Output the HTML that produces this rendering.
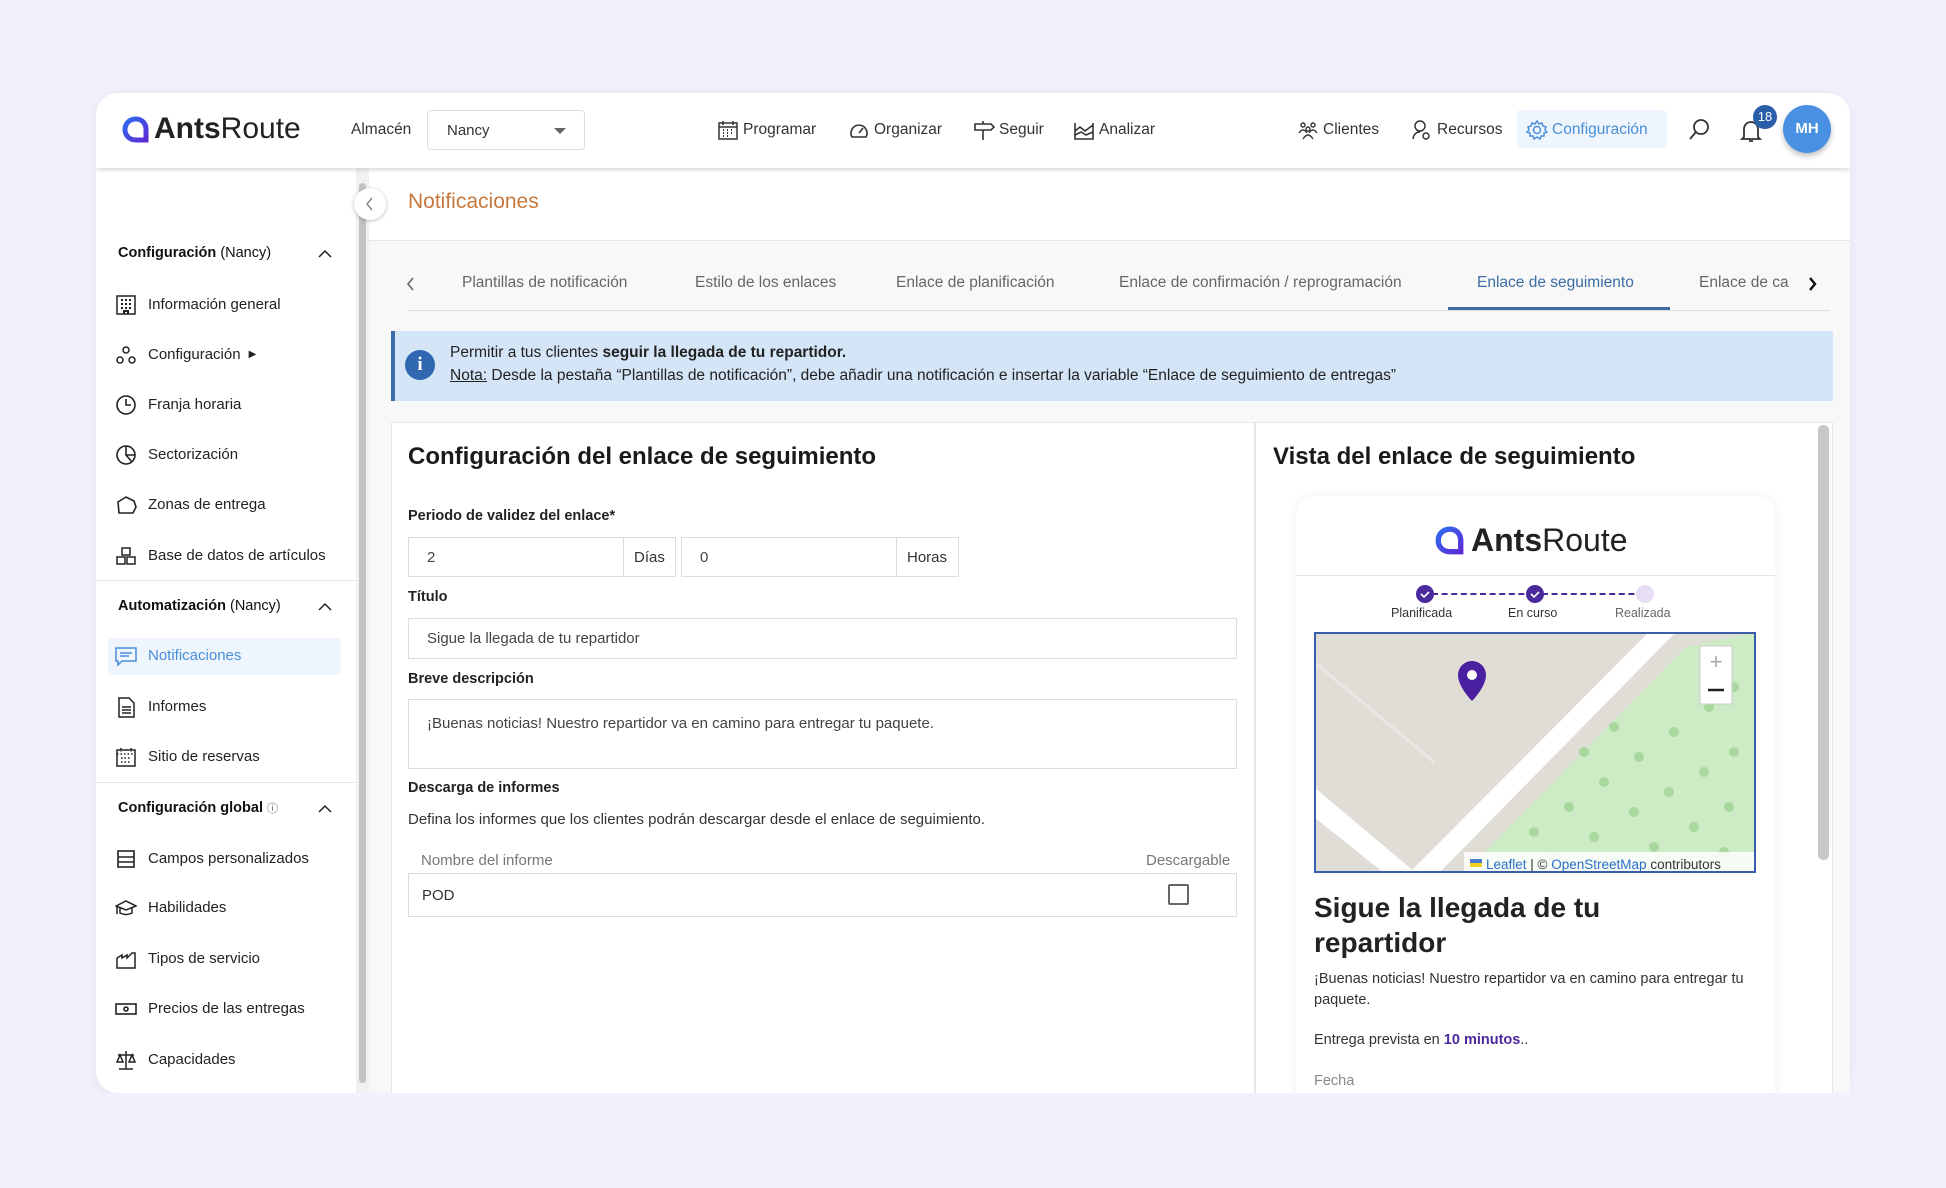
<!DOCTYPE html>
<html><head><meta charset="utf-8">
<style>
*{box-sizing:border-box;margin:0;padding:0}
body{width:1946px;height:1188px;background:#f2f0fa;font-family:"Liberation Sans",sans-serif;color:#222;position:relative;overflow:hidden}
.a{position:absolute;white-space:nowrap}
.card{position:absolute;left:96px;top:93px;width:1754px;height:1000px;background:#fff;border-radius:22px;overflow:hidden;box-shadow:0 2px 10px rgba(80,70,140,.08)}
.hdr{position:absolute;left:0;top:0;width:1754px;height:75px;background:#fff;box-shadow:0 2px 4px rgba(0,0,0,.15);z-index:3}
.nav{font-size:15.5px;color:#333;display:flex;align-items:center;gap:4px}
.nav svg{width:22px;height:22px}
.side .it{position:absolute;left:52px;font-size:15px;color:#222;display:flex;align-items:center}
.side .it svg{width:22px;height:22px;margin-right:11px;margin-left:-33px;position:absolute;left:0}
.sh{position:absolute;left:22px;font-size:14.5px;font-weight:bold;color:#111}
.sh i{font-style:normal;font-weight:normal}
.chev{position:absolute;left:222px;width:14px;height:14px}
.tab{position:absolute;top:274px;font-size:15.5px;color:#666}
.lbl{position:absolute;left:408px;font-size:14.5px;font-weight:bold;color:#222}
.inp{position:absolute;border:1px solid #ddd;background:#fff;font-size:15px;color:#444;display:flex;align-items:center;padding-left:18px}
</style></head><body>
<div class="card">
 <div class="hdr">
  <svg class="a" style="left:26px;top:23px" width="28" height="28" viewBox="0 0 28 28"><defs><linearGradient id="g" x1="0" y1="0" x2="1" y2="1"><stop offset="0" stop-color="#2f6df0"/><stop offset="1" stop-color="#5a2bd6"/></linearGradient></defs><path d="M14 3C7.5 3 3 7.5 3 13.5S7.5 24 14 24h10V13.5C24 7.5 20 3 14 3z" fill="none" stroke="url(#g)" stroke-width="5"/></svg>
  <div class="a" style="left:58px;top:19px;font-size:30px;color:#222"><b>Ants</b>Route</div>
  <div class="a" style="left:255px;top:28px;font-size:15.5px;color:#333">Almacén</div>
  <div class="a" style="left:331px;top:17px;width:158px;height:40px;border:1px solid #ddd;border-radius:4px;font-size:15px;color:#333;padding:11px 0 0 19px">Nancy<span style="position:absolute;right:18px;top:17px;border:6px solid transparent;border-top:6px solid #666;border-bottom:0"></span></div>
  <div class="a nav" style="left:621px;top:26px"><svg viewBox="0 0 22 22" fill="none" stroke="#333" stroke-width="1.5"><rect x="2" y="4" width="18" height="16"/><path d="M2 8h18M6 2v4M16 2v4"/><path d="M6 11h1M10 11h1M14 11h1M6 14h1M10 14h1M14 14h1M6 17h1M10 17h1" stroke-width="2"/></svg>Programar</div>
  <div class="a nav" style="left:752px;top:26px"><svg viewBox="0 0 22 22" fill="none" stroke="#333" stroke-width="1.6"><path d="M4 18a8 8 0 1 1 14 0z"/><path d="M11 14l4-5"/></svg>Organizar</div>
  <div class="a nav" style="left:877px;top:26px"><svg viewBox="0 0 22 22" fill="none" stroke="#333" stroke-width="1.6"><path d="M2 5h16l3 3-3 3H2zM10 2v3M10 11v10"/></svg>Seguir</div>
  <div class="a nav" style="left:977px;top:26px"><svg viewBox="0 0 22 22" fill="none" stroke="#333" stroke-width="1.6"><path d="M2 4v16h18V4M2 12l5-4 5 4 8-6M2 16l6-3 5 3 7-3"/></svg>Analizar</div>
  <div class="a nav" style="left:1201px;top:26px"><svg viewBox="0 0 22 22" fill="none" stroke="#333" stroke-width="1.4"><circle cx="6" cy="6" r="2"/><circle cx="16" cy="6" r="2"/><circle cx="11" cy="10" r="2"/><path d="M2 14q4-6 8 0M12 14q4-6 8 0M6 20q5-8 10 0"/></svg>Clientes</div>
  <div class="a nav" style="left:1315px;top:26px"><svg viewBox="0 0 22 22" fill="none" stroke="#333" stroke-width="1.5"><circle cx="9" cy="7" r="5"/><path d="M2 20q1-7 7-7"/><circle cx="15" cy="17" r="3"/></svg>Recursos</div>
  <div class="a" style="left:1421px;top:17px;width:150px;height:38px;background:#eef5fc;border-radius:4px"></div>
  <div class="a nav" style="left:1430px;top:26px;color:#4b8fd9"><svg viewBox="0 0 22 22" fill="none" stroke="#4b8fd9" stroke-width="1.5"><circle cx="11" cy="11" r="3.5"/><path d="M11 2l2 3 3-1 1 3 3 1-1 3 2 2-3 1 0 3-3 0-1 3-3-2-3 2-1-3-3 0 0-3-3-1 2-2-1-3 3-1 1-3 3 1z"/></svg>Configuración</div>
  <svg class="a" style="left:1591px;top:25px" width="24" height="24" viewBox="0 0 24 24" fill="none" stroke="#333" stroke-width="1.8"><circle cx="14" cy="9" r="7"/><path d="M9 14l-6 7"/></svg>
  <svg class="a" style="left:1644px;top:25px" width="22" height="26" viewBox="0 0 22 26" fill="none" stroke="#333" stroke-width="1.8"><path d="M4 19V11a7 7 0 0 1 14 0v8l2 2H2zM9 23h4"/></svg>
  <div class="a" style="left:1657px;top:12px;width:24px;height:24px;border-radius:12px;background:#2a5ea8;color:#fff;font-size:13px;text-align:center;line-height:24px">18</div>
  <div class="a" style="left:1687px;top:12px;width:48px;height:48px;border-radius:24px;background:#4a90e2;color:#fff;font-size:15px;font-weight:bold;text-align:center;line-height:48px;box-shadow:0 3px 6px rgba(0,0,0,.25)">MH</div>
 </div>

 <div class="side">
  <div class="sh" style="top:152px">Configuración <i>(Nancy)</i></div>
  <svg class="chev" style="top:154px" viewBox="0 0 14 14" fill="none" stroke="#222" stroke-width="1.5"><path d="M1 10l6-6 6 6"/></svg>
  <div class="it" style="top:203px"><svg viewBox="0 0 22 22" fill="none" stroke="#222" stroke-width="1.5"><rect x="2" y="2" width="18" height="18"/><path d="M6 6h2M10 6h2M14 6h2M6 10h2M10 10h2M14 10h2M6 14h2M10 14h2M14 14h2M9 20v-3h4v3" stroke-width="2"/></svg>Información general</div>
  <div class="it" style="top:253px"><svg viewBox="0 0 22 22" fill="none" stroke="#222" stroke-width="1.5"><circle cx="11" cy="6" r="3"/><circle cx="5" cy="16" r="3"/><circle cx="17" cy="16" r="3"/></svg>Configuración <span style="font-size:10px;margin-left:8px">▶</span></div>
  <div class="it" style="top:303px"><svg viewBox="0 0 22 22" fill="none" stroke="#222" stroke-width="1.6"><circle cx="11" cy="11" r="9"/><path d="M11 5v6h5"/></svg>Franja horaria</div>
  <div class="it" style="top:353px"><svg viewBox="0 0 22 22" fill="none" stroke="#222" stroke-width="1.6"><circle cx="11" cy="11" r="9"/><path d="M11 2v9h9M11 11l6 7"/></svg>Sectorización</div>
  <div class="it" style="top:403px"><svg viewBox="0 0 22 22" fill="none" stroke="#222" stroke-width="1.6"><path d="M3 8l8-5 8 4 2 6-3 6H4z"/></svg>Zonas de entrega</div>
  <div class="it" style="top:454px"><svg viewBox="0 0 22 22" fill="none" stroke="#222" stroke-width="1.5"><rect x="7" y="3" width="8" height="7"/><rect x="2" y="12" width="8" height="7"/><rect x="12" y="12" width="8" height="7"/></svg>Base de datos de artículos</div>
  <div class="a" style="left:0;top:487px;width:260px;height:1px;background:#e4e4e4"></div>
  <div class="sh" style="top:505px">Automatización <i>(Nancy)</i></div>
  <svg class="chev" style="top:507px" viewBox="0 0 14 14" fill="none" stroke="#222" stroke-width="1.5"><path d="M1 10l6-6 6 6"/></svg>
  <div class="a" style="left:12px;top:545px;width:233px;height:37px;background:#eef5fc;border-radius:4px"></div>
  <div class="it" style="top:554px;color:#4b8fd9"><svg viewBox="0 0 22 22" fill="none" stroke="#4b8fd9" stroke-width="1.5"><path d="M1 3h20v13H7l-4 4v-4H1z"/><path d="M5 8h12M5 11h9"/></svg>Notificaciones</div>
  <div class="it" style="top:605px"><svg viewBox="0 0 22 22" fill="none" stroke="#222" stroke-width="1.5"><path d="M4 2h10l5 5v14H4z"/><path d="M7 11h9M7 14h9M7 17h9"/></svg>Informes</div>
  <div class="it" style="top:655px"><svg viewBox="0 0 22 22" fill="none" stroke="#222" stroke-width="1.5"><rect x="2" y="4" width="18" height="16"/><path d="M2 8h18M6 2v4M16 2v4M6 12h10M6 16h10" stroke-dasharray="1.5 2"/></svg>Sitio de reservas</div>
  <div class="a" style="left:0;top:689px;width:260px;height:1px;background:#e4e4e4"></div>
  <div class="sh" style="top:707px">Configuración global <i style="font-size:11px;color:#555">ⓘ</i></div>
  <svg class="chev" style="top:709px" viewBox="0 0 14 14" fill="none" stroke="#222" stroke-width="1.5"><path d="M1 10l6-6 6 6"/></svg>
  <div class="it" style="top:757px"><svg viewBox="0 0 22 22" fill="none" stroke="#222" stroke-width="1.6"><rect x="3" y="3" width="16" height="16"/><path d="M3 9h16M3 14h16"/></svg>Campos personalizados</div>
  <div class="it" style="top:806px"><svg viewBox="0 0 22 22" fill="none" stroke="#222" stroke-width="1.5"><path d="M1 9l10-5 10 5-10 4zM5 11v5q6 3 12 0v-5M2 9v8"/></svg>Habilidades</div>
  <div class="it" style="top:857px"><svg viewBox="0 0 22 22" fill="none" stroke="#222" stroke-width="1.5"><path d="M2 20V10l5-3v3l5-3v3l5-5h3v15z"/></svg>Tipos de servicio</div>
  <div class="it" style="top:907px"><svg viewBox="0 0 22 22" fill="none" stroke="#222" stroke-width="1.6"><rect x="1" y="6" width="20" height="10"/><circle cx="11" cy="11" r="2"/></svg>Precios de las entregas</div>
  <div class="it" style="top:958px"><svg viewBox="0 0 22 22" fill="none" stroke="#222" stroke-width="1.5"><path d="M11 2v18M4 20h14M3 6h16M5 6l-3 7h6zM17 6l-3 7h6z"/></svg>Capacidades</div>
 </div>
 <div class="a" style="left:260px;top:75px;width:13px;height:925px;background:#f1f1f1"></div>
 <div class="a" style="left:263px;top:90px;width:7px;height:900px;background:#c4c4c4;border-radius:4px"></div>
</div>

<div class="a" style="left:369px;top:168px;width:1481px;height:925px;background:#fff"></div>
<div class="a" style="left:369px;top:241px;width:1481px;height:852px;background:#f8f8f8"></div>
<div class="a" style="left:369px;top:240px;width:1481px;height:1px;background:#e6e6e6"></div>
<div class="a" style="left:354px;top:188px;width:32px;height:32px;border-radius:16px;background:#fff;box-shadow:0 1px 4px rgba(0,0,0,.25)"><svg width="32" height="32" viewBox="0 0 32 32" fill="none" stroke="#888" stroke-width="1.5"><path d="M18 10l-5 6 5 6"/></svg></div>
<div class="a" style="left:408px;top:190px;font-size:21px;color:#c7783d">Notificaciones</div>

<svg class="a" style="left:404px;top:275px" width="14" height="18" viewBox="0 0 14 18" fill="none" stroke="#666" stroke-width="1.6"><path d="M9 3l-5 6 5 6"/></svg>
<div class="tab" style="left:462px">Plantillas de notificación</div>
<div class="tab" style="left:695px">Estilo de los enlaces</div>
<div class="tab" style="left:896px">Enlace de planificación</div>
<div class="tab" style="left:1119px">Enlace de confirmación / reprogramación</div>
<div class="tab" style="left:1477px;color:#3b6ca3">Enlace de seguimiento</div>
<div class="tab" style="left:1699px">Enlace de ca</div>
<svg class="a" style="left:1805px;top:275px" width="14" height="18" viewBox="0 0 14 18" fill="none" stroke="#111" stroke-width="2.4"><path d="M5 3l5 6-5 6"/></svg>
<div class="a" style="left:408px;top:310px;width:1422px;height:1px;background:#ddd"></div>
<div class="a" style="left:1448px;top:307px;width:222px;height:3px;background:#3b6ca3"></div>

<div class="a" style="left:391px;top:331px;width:1442px;height:70px;background:#d5e5f8;border-left:4px solid #3a6ea8"></div>
<div class="a" style="left:405px;top:350px;width:30px;height:30px;border-radius:15px;background:#2f68b0;color:#fff;font-weight:bold;font-size:19px;text-align:center;line-height:30px;font-family:'Liberation Serif',serif">i</div>
<div class="a" style="left:450px;top:344px;font-size:15.5px;color:#222">Permitir a tus clientes <b>seguir la llegada de tu repartidor.</b></div>
<div class="a" style="left:450px;top:367px;font-size:15.5px;color:#222"><u>Nota:</u> Desde la pestaña “Plantillas de notificación”, debe añadir una notificación e insertar la variable “Enlace de seguimiento de entregas”</div>

<div class="a" style="left:391px;top:422px;width:864px;height:680px;background:#fff;border:1px solid #e6e6e6"></div>
<div class="a" style="left:408px;top:443px;font-size:24px;font-weight:bold;color:#1a1a1a">Configuración del enlace de seguimiento</div>
<div class="lbl" style="top:508px">Periodo de validez del enlace*</div>
<div class="inp" style="left:408px;top:537px;width:268px;height:40px">2</div>
<div class="inp" style="left:623px;top:537px;width:53px;height:40px;padding-left:10px;color:#333">Días</div>
<div class="inp" style="left:681px;top:537px;width:278px;height:40px">0</div>
<div class="inp" style="left:896px;top:537px;width:63px;height:40px;padding-left:10px;color:#333">Horas</div>
<div class="lbl" style="top:589px">Título</div>
<div class="inp" style="left:408px;top:618px;width:829px;height:41px">Sigue la llegada de tu repartidor</div>
<div class="lbl" style="top:671px">Breve descripción</div>
<div class="inp" style="left:408px;top:699px;width:829px;height:70px;align-items:flex-start;padding-top:15px">¡Buenas noticias! Nuestro repartidor va en camino para entregar tu paquete.</div>
<div class="lbl" style="top:780px">Descarga de informes</div>
<div class="a" style="left:408px;top:811px;font-size:15px;color:#333">Defina los informes que los clientes podrán descargar desde el enlace de seguimiento.</div>
<div class="a" style="left:421px;top:852px;font-size:15px;color:#777">Nombre del informe</div>
<div class="a" style="left:1146px;top:852px;font-size:15px;color:#777">Descargable</div>
<div class="inp" style="left:408px;top:873px;width:829px;height:44px;padding-left:13px;color:#333">POD</div>
<div class="a" style="left:1168px;top:884px;width:21px;height:21px;border:2px solid #666;border-radius:2px"></div>

<div class="a" style="left:1255px;top:422px;width:578px;height:680px;background:#fff;border:1px solid #e6e6e6"></div>
<div class="a" style="left:1818px;top:425px;width:11px;height:435px;background:#c8c8c8;border-radius:5px"></div>
<div class="a" style="left:1273px;top:443px;font-size:24px;font-weight:bold;color:#1a1a1a">Vista del enlace de seguimiento</div>
<div class="a" style="left:1296px;top:496px;width:479px;height:620px;background:#fff;border-radius:18px;box-shadow:0 0 10px rgba(0,0,0,.07)"></div>
<svg class="a" style="left:1435px;top:526px" width="30" height="30" viewBox="0 0 28 28"><defs><linearGradient id="g2" x1="0" y1="0" x2="1" y2="1"><stop offset="0" stop-color="#2f6df0"/><stop offset="1" stop-color="#5a2bd6"/></linearGradient></defs><path d="M14 3C7.5 3 3 7.5 3 13.5S7.5 24 14 24h10V13.5C24 7.5 20 3 14 3z" fill="none" stroke="url(#g2)" stroke-width="5"/></svg>
<div class="a" style="left:1471px;top:522px;font-size:32px;color:#222"><b>Ants</b>Route</div>
<div class="a" style="left:1296px;top:575px;width:479px;height:1px;background:#e4e4e4"></div>
<div class="a" style="left:1432px;top:593px;width:102px;border-top:2px dashed #4a2a9c"></div>
<div class="a" style="left:1542px;top:593px;width:102px;border-top:2px dashed #4a2a9c"></div>
<div class="a" style="left:1416px;top:585px;width:18px;height:18px;border-radius:9px;background:#4a2a9c"><svg width="18" height="18" viewBox="0 0 18 18" fill="none" stroke="#fff" stroke-width="1.6"><path d="M5 9l3 3 5-5"/></svg></div>
<div class="a" style="left:1526px;top:585px;width:18px;height:18px;border-radius:9px;background:#4a2a9c"><svg width="18" height="18" viewBox="0 0 18 18" fill="none" stroke="#fff" stroke-width="1.6"><path d="M5 9l3 3 5-5"/></svg></div>
<div class="a" style="left:1636px;top:585px;width:18px;height:18px;border-radius:9px;background:#e5def5"></div>
<div class="a" style="left:1391px;top:606px;font-size:12.5px;color:#333">Planificada</div>
<div class="a" style="left:1508px;top:606px;font-size:12.5px;color:#333">En curso</div>
<div class="a" style="left:1615px;top:606px;font-size:12.5px;color:#666">Realizada</div>

<svg class="a" style="left:1314px;top:632px" width="442" height="241" viewBox="0 0 442 241">
 <rect width="442" height="241" fill="#e0dcd6"/>
 <path d="M150 241L372 15L442 0V241z" fill="#cdebc4"/>
 <path d="M95 241L335 0H362L125 241z" fill="#fff"/>
 <path d="M0 185L70 241h32L0 155z" fill="#fff"/>
 <path d="M0 30L120 130" fill="none" stroke="#ebe7e2" stroke-width="3"/>
 <g fill="#a9d89e">
  <circle cx="220" cy="200" r="5"/><circle cx="255" cy="175" r="5"/><circle cx="290" cy="150" r="5"/><circle cx="325" cy="125" r="5"/><circle cx="360" cy="100" r="5"/><circle cx="395" cy="75" r="5"/><circle cx="420" cy="55" r="5"/>
  <circle cx="240" cy="225" r="5"/><circle cx="280" cy="205" r="5"/><circle cx="320" cy="180" r="5"/><circle cx="355" cy="160" r="5"/><circle cx="390" cy="140" r="5"/><circle cx="420" cy="120" r="5"/>
  <circle cx="300" cy="230" r="5"/><circle cx="340" cy="215" r="5"/><circle cx="380" cy="195" r="5"/><circle cx="415" cy="175" r="5"/><circle cx="200" cy="230" r="5"/><circle cx="410" cy="220" r="5"/><circle cx="300" cy="95" r="5"/><circle cx="270" cy="120" r="5"/>
 </g>
 <path d="M144 43a14 14 0 0 1 28 0c0 12-14 26-14 26s-14-14-14-26z" fill="#4a1fa0"/>
 <circle cx="158" cy="43" r="5" fill="#fff"/>
 <rect x="386" y="14" width="32" height="58" fill="#fff" stroke="#ccc"/>
 <text x="402" y="37" font-size="22" fill="#aaa" text-anchor="middle" font-family="Liberation Sans">+</text>
 <path d="M394 58h16" stroke="#222" stroke-width="2.5"/>
 <rect x="150" y="220" width="292" height="21" fill="rgba(255,255,255,.85)"/>
 <rect x="156" y="227" width="12" height="4" fill="#4a7bd0"/><rect x="156" y="231" width="12" height="4" fill="#f2d020"/>
 <text x="172" y="237" font-size="13.5" font-family="Liberation Sans" fill="#333"><tspan fill="#2a6fc9">Leaflet</tspan> | © <tspan fill="#2a6fc9">OpenStreetMap</tspan> contributors</text>
 <rect x="1" y="1" width="440" height="239" fill="none" stroke="#3a5fa8" stroke-width="2"/>
</svg>

<div class="a" style="left:1314px;top:890px;font-size:28px;font-weight:bold;color:#222;line-height:35px;white-space:normal;width:420px">Sigue la llegada de tu repartidor</div>
<div class="a" style="left:1314px;top:969px;font-size:14.5px;color:#333;line-height:21px;white-space:normal;width:430px">¡Buenas noticias! Nuestro repartidor va en camino para entregar tu paquete.</div>
<div class="a" style="left:1314px;top:1032px;font-size:14.5px;color:#333">Entrega prevista en <b style="color:#4a2a9c">10 minutos</b>..</div>
<div class="a" style="left:1314px;top:1073px;font-size:14.5px;color:#888">Fecha</div>

<div class="a" style="left:0;top:1093px;width:1946px;height:95px;background:#f2f0fa"></div>
</body></html>
